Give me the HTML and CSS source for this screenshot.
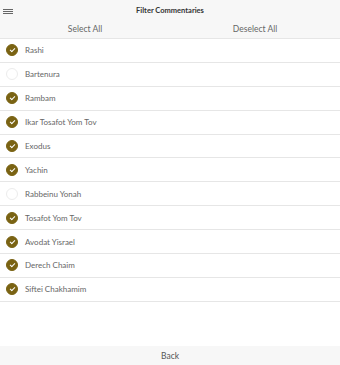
FILE: index.html
```html
<!DOCTYPE html>
<html lang="en">
<head>
<meta charset="UTF-8">
<meta name="viewport" content="width=device-width, initial-scale=1.0">
<title>Filter Commentaries</title>
<link rel="stylesheet" href="styles.css">
</head>
<body>
<div class="page">
  <div class="header">
    <div class="topbar">
      <span class="menu">
        <svg width="10" height="5" viewBox="0 0 10 5"><path d="M0 .5h10M0 2.5h10M0 4.5h10" stroke="#666" stroke-width="1"/></svg>
      </span>
      <span class="title">Filter Commentaries</span>
    </div>
    <div class="tabs">
      <span class="tab">Select All</span>
      <span class="tab">Deselect All</span>
    </div>
  </div>

  <ul class="list">
    <li class="item checked"><span class="check"></span>Rashi</li>
    <li class="item"><span class="check"></span>Bartenura</li>
    <li class="item checked"><span class="check"></span>Rambam</li>
    <li class="item checked"><span class="check"></span>Ikar Tosafot Yom Tov</li>
    <li class="item checked"><span class="check"></span>Exodus</li>
    <li class="item checked"><span class="check"></span>Yachin</li>
    <li class="item"><span class="check"></span>Rabbeinu Yonah</li>
    <li class="item checked"><span class="check"></span>Tosafot Yom Tov</li>
    <li class="item checked"><span class="check"></span>Avodat Yisrael</li>
    <li class="item checked"><span class="check"></span>Derech Chaim</li>
    <li class="item checked"><span class="check"></span>Siftei Chakhamim</li>
  </ul>

  <div class="footer">Back</div>
</div>
</body>
</html>
```
FILE: styles.css
```css
html, body {
  margin: 0;
  padding: 0;
  height: 100%;
}

body {
  font-family: Lato, sans-serif;
  background-color: #fff;
  color: #555;
}

.page {
  display: flex;
  flex-direction: column;
  height: 100vh;
}

.header {
  background-color: #f7f7f7;
  border-bottom: 1px solid #e6e6e6;
}

.topbar {
  position: relative;
  height: 20px;
  display: flex;
  align-items: center;
  justify-content: center;
}

.menu {
  position: absolute;
  left: 3px;
  top: 8px;
  line-height: 0;
}

.title {
  font-size: 7.5px;
  font-weight: 700;
  color: #333;
}

.tabs {
  display: flex;
  height: 18px;
}

.tab {
  flex: 1;
  display: flex;
  align-items: center;
  justify-content: center;
  font-size: 8.5px;
  color: #666;
}

.list {
  list-style: none;
  margin: 0;
  padding: 0;
  flex: 1;
}

.item {
  height: 22.9px;
  display: flex;
  align-items: center;
  border-bottom: 1px solid #e6e6e6;
  font-size: 8px;
  color: #666;
}

.check {
  width: 12px;
  height: 12px;
  margin: 0 7px 0 6px;
  border-radius: 50%;
  border: 1px solid #ececec;
  box-sizing: border-box;
  display: flex;
  align-items: center;
  justify-content: center;
}

.checked .check {
  background-color: #7a6313;
  border-color: #7a6313;
}

.checked .check::after {
  content: "";
  width: 4px;
  height: 2px;
  margin-top: -1px;
  border-left: 1px solid #fff;
  border-bottom: 1px solid #fff;
  transform: rotate(-45deg);
}

.footer {
  height: 19px;
  background-color: #f7f7f7;
  display: flex;
  align-items: center;
  justify-content: center;
  font-size: 8.5px;
  color: #555;
}
```
